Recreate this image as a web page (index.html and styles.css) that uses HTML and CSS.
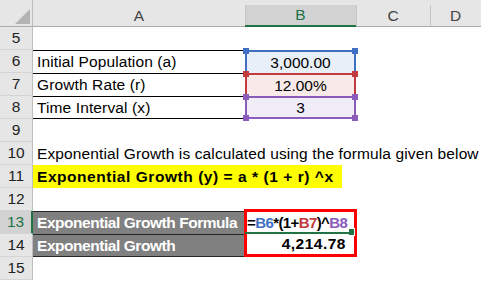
FILE: index.html
```html
<!DOCTYPE html>
<html>
<head>
<meta charset="utf-8">
<link rel="stylesheet" href="styles.css">
</head>
<body>
<div class="sheet">
  <div class="corner"></div>
  <div class="colh">A</div>
  <div class="colh sel">B</div>
  <div class="colh">C</div>
  <div class="colh">D</div>

  <div class="rowh">5</div>
  <div class="fill"></div>

  <div class="rowh">6</div>
  <div class="c lined">Initial Population (a)</div>
  <div class="rng rng-blue"><span class="h hl-t"></span><span class="h hr-t"></span>3,000.00</div>
  <div class="fill2"></div>

  <div class="rowh">7</div>
  <div class="c lined">Growth Rate (r)</div>
  <div class="rng rng-red"><span class="h hl-t"></span><span class="h hr-t"></span>12.00%</div>
  <div class="fill2"></div>

  <div class="rowh">8</div>
  <div class="c lined last">Time Interval (x)</div>
  <div class="rng rng-purple"><span class="h hl-t"></span><span class="h hr-t"></span><span class="h hl-b"></span><span class="h hr-b"></span>3</div>
  <div class="fill2"></div>

  <div class="rowh">9</div>
  <div class="fill"></div>

  <div class="rowh">10</div>
  <div class="c wide">Exponential Growth is calculated using the formula given below</div>

  <div class="rowh">11</div>
  <div class="wide"><span class="yellow">Exponential Growth (y) = a * (1 + r) ^x</span></div>

  <div class="rowh">12</div>
  <div class="fill"></div>

  <div class="rowh act">13</div>
  <div class="c gray">Exponential Growth Formula</div>
  <div class="redbox">
    <div class="formula">=<span class="ref-b">B6</span>*(1+<span class="ref-r">B7</span>)^<span class="ref-p">B8</span></div>
    <div class="value">4,214.78</div>
  </div>
  <div class="fill2"></div>

  <div class="rowh">14</div>
  <div class="c gray last">Exponential Growth</div>
  <div class="fill2"></div>

  <div class="rowh">15</div>
  <div class="fill"></div>
</div>
</body>
</html>
```

FILE: styles.css
```css
* { box-sizing: border-box; }

body {
  margin: 0;
  width: 481px;
  height: 281px;
  overflow: hidden;
  background: #fff;
  font-family: "Liberation Sans", Arial, sans-serif;
  font-size: 15.5px;
  color: #000;
}

.sheet {
  display: grid;
  grid-template-columns: 33px 212px 111px 74px 1fr;
  grid-template-rows: 27px repeat(11, 23px);
}

.corner {
  background: #e6e6e6;
  border-right: 1px solid #bdbdbd;
  border-bottom: 1px solid #ababab;
  position: relative;
}
.corner::after {
  content: "";
  position: absolute;
  right: 2px;
  bottom: 2px;
  width: 0;
  height: 0;
  border-left: 15px solid transparent;
  border-bottom: 15px solid #b4b4b4;
}

.colh {
  position: relative;
  background: #e6e6e6;
  border-top: 5px solid #e6e6e6;
  border-bottom: 1px solid #ababab;
  display: flex;
  align-items: center;
  justify-content: center;
  color: #444;
}
.colh + .colh::before {
  content: "";
  position: absolute;
  left: 0;
  top: 0;
  bottom: 0;
  width: 1px;
  background: #c6c6c6;
}
.colh.sel {
  background: #d2d2d2;
  background-clip: padding-box;
  color: #217346;
  border-bottom: 2px solid #217346;
}

.rowh {
  grid-column: 1;
  background: #e6e6e6;
  border-right: 1px solid #bdbdbd;
  border-bottom: 1px solid #d4d4d4;
  display: flex;
  align-items: center;
  justify-content: center;
  color: #222;
}
.rowh.act {
  background: #d2d2d2;
  color: #217346;
  border-right: 2px solid #217346;
}

.fill { grid-column: 2 / -1; }
.fill2 { grid-column: span 2; }

.c {
  padding-left: 4px;
  line-height: 23px;
  white-space: nowrap;
  letter-spacing: 0.12px;
}
.wide {
  grid-column: 2 / -1;
  white-space: nowrap;
}

.lined { box-shadow: inset 0 1px 0 #000; }
.lined.last { box-shadow: inset 0 1px 0 #000, inset 0 -1px 0 #000; }

.rng {
  position: relative;
  display: flex;
  align-items: center;
  justify-content: center;
  border: 2px solid;
  border-bottom: 0;
  padding-top: 1px;
}
.rng-blue { border-color: #3f6fc3; background: #e9eff8; }
.rng-red { border-color: #c2393e; background: #f9eaea; }
.rng-purple { border-color: #8a5bbb; background: #f1edf7; border-bottom: 2px solid #8a5bbb; padding-top: 0; }

.h {
  position: absolute;
  width: 6px;
  height: 6px;
  z-index: 2;
}
.rng-blue .h { background: #3f6fc3; }
.rng-red .h { background: #c2393e; }
.rng-purple .h { background: #8a5bbb; }
.hl-t { left: -4px; top: -4px; }
.hr-t { right: -4px; top: -4px; }
.hl-b { left: -4px; bottom: -4px; }
.hr-b { right: -4px; bottom: -4px; }

.yellow {
  display: inline-block;
  height: 23px;
  line-height: 23px;
  padding: 0 8px 0 4px;
  background: #ffff00;
  font-weight: bold;
  letter-spacing: 0.55px;
}

.gray {
  background: #808080;
  color: #fff;
  font-weight: bold;
  letter-spacing: -0.45px;
  box-shadow: inset 0 1px 0 #262626;
}
.gray.last { box-shadow: inset 0 1px 0 #262626, inset 0 -1px 0 #262626; }

.redbox {
  grid-column: 3;
  grid-row: 10 / 12;
  margin: -2px -1px 0 -1px;
  border: 3px solid #ff0000;
  display: grid;
  grid-template-rows: 1fr 1fr;
  position: relative;
  z-index: 3;
  background: #fff;
  font-weight: bold;
}
.formula {
  position: relative;
  line-height: 21px;
  white-space: nowrap;
  font-size: 15px;
  letter-spacing: -0.6px;
}
.formula::after {
  content: "";
  position: absolute;
  left: -2px;
  right: 3px;
  bottom: -1px;
  height: 2px;
  background: #217346;
}
.formula::before {
  content: "";
  position: absolute;
  right: -1px;
  bottom: -3px;
  width: 5px;
  height: 6px;
  background: #217346;
  border: 1px solid #fff;
}
.ref-b { color: #3f6fc3; }
.ref-r { color: #c2393e; }
.ref-p { color: #8a5bbb; }
.value {
  line-height: 21px;
  text-align: right;
  padding-right: 8px;
  letter-spacing: 0.5px;
}
```
